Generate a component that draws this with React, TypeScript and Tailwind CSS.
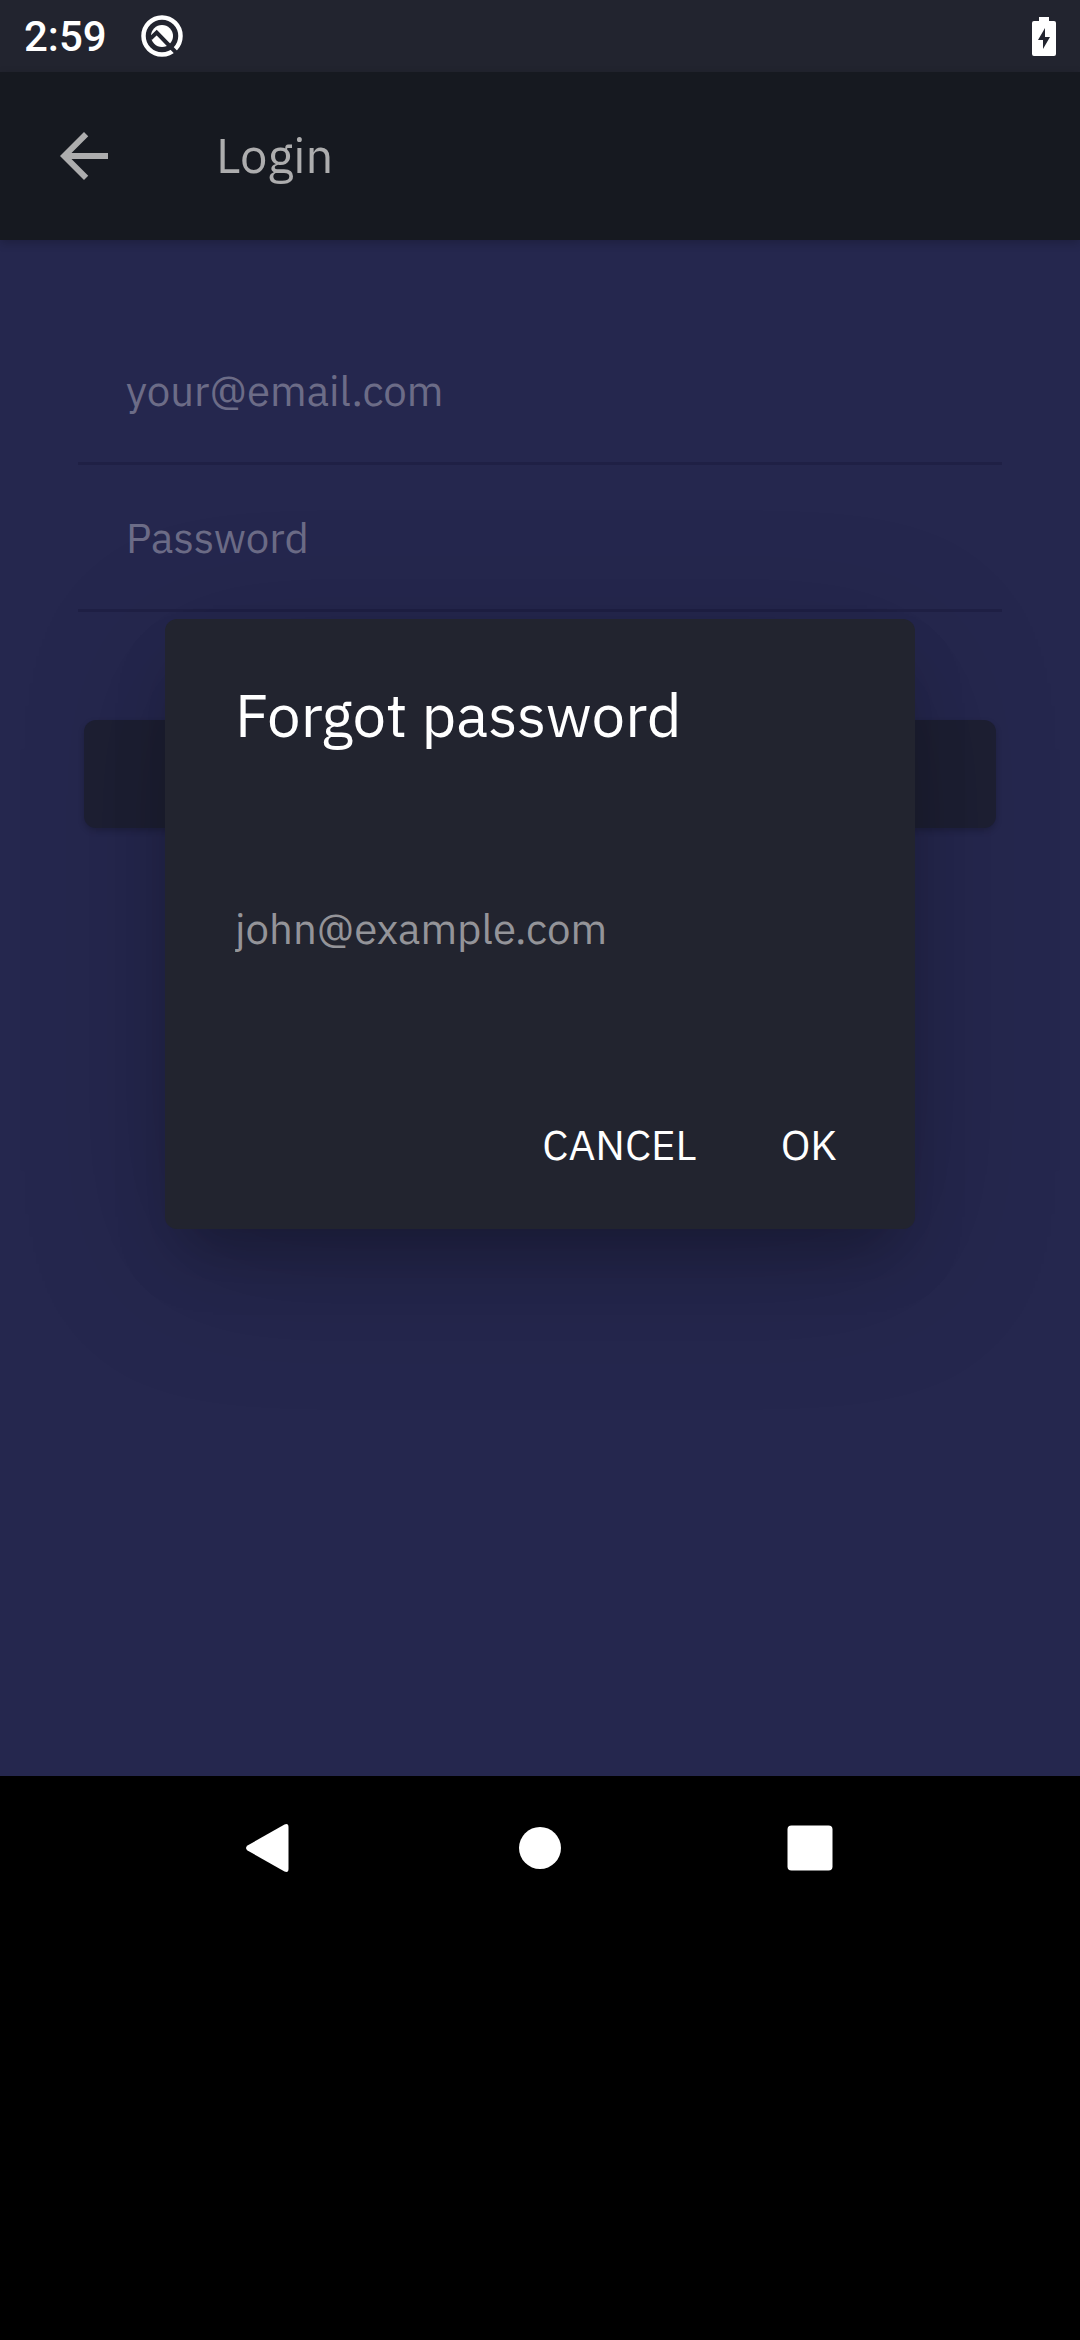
import React from "react";

function StatusBar() {
  return (
    <header className="flex h-[72px] items-center bg-[#22242f] px-6 text-white">
      <span className="pt-0.5 font-['Roboto'] text-[42px] leading-[48px] font-medium">2:59</span>
      <svg className="ml-[34px] size-[42px]" viewBox="0 0 42 42" aria-hidden="true">
        <circle cx="21" cy="21" r="18.500" fill="none" stroke="#fff" strokeWidth="4.500" />
        <circle cx="21" cy="21" r="11" fill="#fff" />
        <path d="M9.500 23.500L15.700 17.500L36 38.500" fill="none" stroke="#22242f" strokeWidth="4" />
      </svg>
      <svg className="ml-auto h-[39px] w-[24px]" viewBox="0 0 24 39" aria-hidden="true">
        <path d="M7 0H17V4H22Q24 4 24 6V37Q24 39 22 39H2Q0 39 0 37V6Q0 4 2 4H7Z" fill="#fff" />
        <path d="M13 11L6 23H11V32L18 20H13Z" fill="#22242f" />
      </svg>
    </header>
  );
}

function AppBar() {
  return (
    <div className="relative flex h-[168px] items-center bg-[#161920] pl-12 text-[#adadae] shadow-[0_3px_9px_rgba(0,0,0,0.2)]">
      <button type="button" aria-label="Back">
        <svg className="size-[72px]" viewBox="0 0 24 24" fill="currentColor" aria-hidden="true">
          <path d="M20 11H7.830l5.590-5.590L12 4l-8 8 8 8 1.410-1.410L7.830 13H20v-2z" />
        </svg>
      </button>
      <h1 className="ml-24 pb-0.5 text-[49px] leading-[60px]">Login</h1>
    </div>
  );
}

function LoginForm() {
  const field =
    "block h-[147px] w-full border-b-3 border-[#1f2045] bg-transparent px-12 text-[42px] placeholder:text-[#6c6c87] placeholder:opacity-100 outline-none";
  return (
    <form className="px-[78px] pt-[78px]">
      <input className={field} type="email" aria-label="Email" placeholder="your@email.com" />
      <input className={field} type="password" aria-label="Password" placeholder="Password" />
      <div className="px-1.5 pt-[108px]">
        <button
          type="button"
          aria-label="Log in"
          className="block h-[108px] w-full rounded-xl bg-[#1d1f33] shadow-[0_3px_6px_rgba(0,0,0,0.2)]"
        />
      </div>
    </form>
  );
}

function ForgotPasswordDialog() {
  return (
    <div
      role="dialog"
      aria-labelledby="dialog-title"
      className="w-[750px] rounded-xl bg-[#22242f] px-[70px] pt-[60px] pb-7 text-white shadow-[0_36px_60px_-18px_rgba(0,0,0,0.26),0_36px_150px_rgba(0,0,0,0.18)]"
    >
      <h2 id="dialog-title" className="text-[60px] leading-[72px]">
        Forgot password
      </h2>
      <input
        type="email"
        aria-label="Email address"
        placeholder="john@example.com"
        className="mt-[105px] block h-[144px] w-full bg-transparent text-[42px] outline-none placeholder:text-[#949499] placeholder:opacity-100"
      />
      <div className="mt-[93px] flex h-[108px] justify-end gap-[84px] pr-2 pb-1.5 text-[42px]">
        <button type="button">CANCEL</button>
        <button type="button">OK</button>
      </div>
    </div>
  );
}

function NavigationBar() {
  return (
    <nav className="flex h-[144px] items-center justify-center gap-[198px]">
      <button type="button" aria-label="Back">
        <svg className="size-[72px]" viewBox="0 0 72 72" fill="#fff">
          <path d="M13.500 33.500L50.500 12.500Q54.500 11 54.500 15V57Q54.500 61 50.500 59.500L13.500 38.500Q10.500 36 13.500 33.500Z" />
        </svg>
      </button>
      <button type="button" aria-label="Home">
        <svg className="size-[72px]" viewBox="0 0 72 72" fill="#fff">
          <circle cx="36" cy="36" r="21" />
        </svg>
      </button>
      <button type="button" aria-label="Recent apps">
        <svg className="size-[72px]" viewBox="0 0 72 72" fill="#fff">
          <rect x="13.500" y="13.500" width="45" height="45" rx="4" />
        </svg>
      </button>
    </nav>
  );
}

export default function App() {
  return (
    <div className="min-h-screen bg-black font-['IBM_Plex_Sans','Open_Sans',sans-serif]">
      <StatusBar />
      <div className="relative">
        <AppBar />
        <main className="min-h-[1536px] bg-[#25274e]">
          <LoginForm />
        </main>
        <div className="absolute inset-0 flex items-center justify-center overflow-hidden">
          <ForgotPasswordDialog />
        </div>
      </div>
      <NavigationBar />
    </div>
  );
}
